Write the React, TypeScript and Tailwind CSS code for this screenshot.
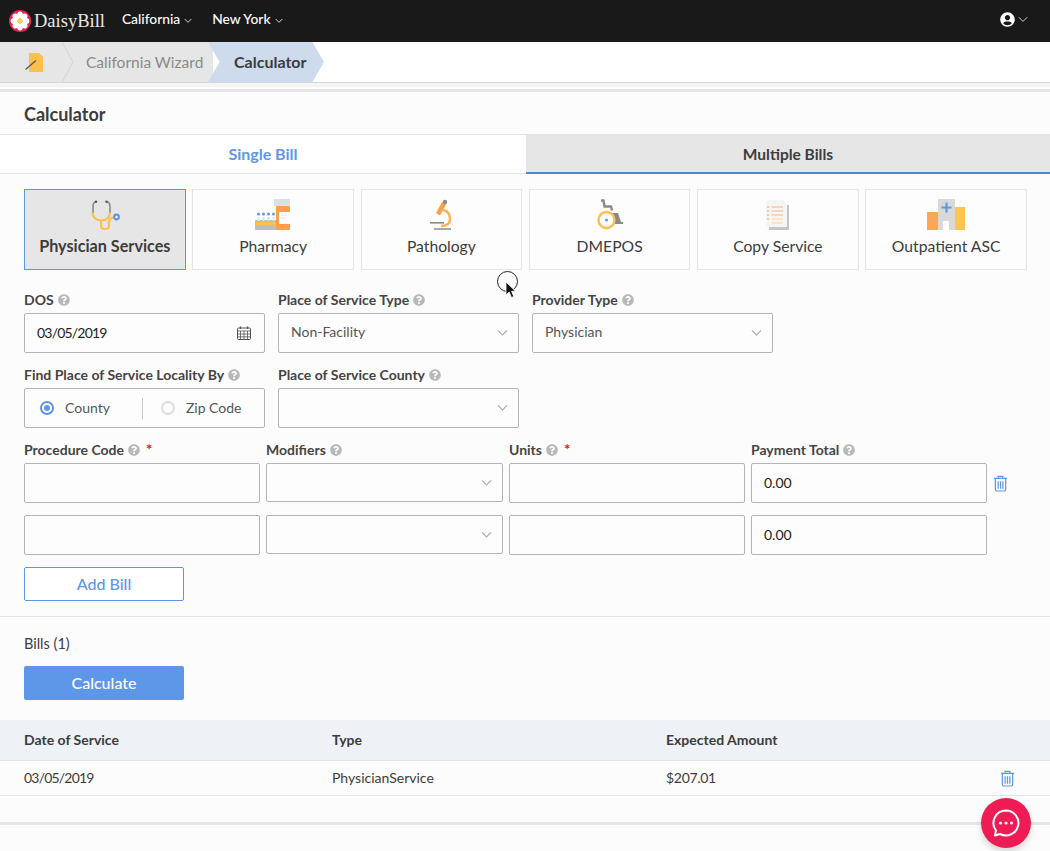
import { FaQuestionCircle, FaUserCircle } from "react-icons/fa";

const labelClass = "flex h-[17px] items-center gap-[4px] pb-[2px] text-[14px] font-bold leading-none text-[#444]";
const boxClass = "rounded-[2px] border border-[#b4b4b4] bg-[#fdfdfd]";

function Chevron({ className }: { className: string }) {
  return (
    <svg viewBox="0 0 12 8" className={className} fill="none" stroke="currentColor" strokeWidth="1.2">
      <path d="M1 1.500l5 5 5-5" />
    </svg>
  );
}

function TrashIcon() {
  return (
    <svg viewBox="0 0 16 18" className="h-[17px] w-[15px] text-[#5f97e8]" fill="none" stroke="currentColor" strokeWidth="1.300">
      <path d="M1 3.500h14M5.500 3.500V1.500h5v2M2.500 3.500v12a1.500 1.500 0 0 0 1.500 1.500h8a1.500 1.500 0 0 0 1.500-1.500v-12" />
      <path d="M5.500 6.500v8M8 6.500v8M10.500 6.500v8" />
    </svg>
  );
}

function Label({ text, required, width }: { text: string; required?: boolean; width?: string }) {
  return (
    <div className={`${labelClass} ${width ?? ""}`}>
      <span>{text}</span>
      <FaQuestionCircle className="size-[12px] shrink-0 text-[#b8b8b8]" />
      {required && <span className="ml-[2px] text-[15px] text-[#e0182d]">*</span>}
    </div>
  );
}

function SelectBox({ value, className }: { value?: string; className: string }) {
  return (
    <div className={`flex items-center justify-between pl-[12px] pr-[10px] text-[14px] text-[#555] ${boxClass} ${className}`}>
      <span className="-mt-[3px]">{value}</span>
      <Chevron className="w-[11px] text-[#aaa]" />
    </div>
  );
}

function Stethoscope() {
  return (
    <svg viewBox="0 0 32 32" className="size-[32px]">
      <path d="M7 3C5 3 4 5 4 8v6" fill="none" stroke="#8a8a8a" strokeWidth="1.600" />
      <path d="M18 3c2 0 3 2 3 5v6" fill="none" stroke="#8a8a8a" strokeWidth="1.600" />
      <circle cx="7" cy="2.800" r="1.200" fill="#555" />
      <circle cx="17.500" cy="2.800" r="1.200" fill="#555" />
      <path d="M3.500 13.500c0 5 4 8 9 8s8-3 8.500-8M12 21v6c0 4 8 4 8 0v-4c0-3 3-5 7-5" fill="none" stroke="#fcc04d" strokeWidth="2.200" />
      <circle cx="27.500" cy="18" r="3.400" fill="#5f97e8" />
      <circle cx="27.500" cy="18" r="1.200" fill="#fff" />
    </svg>
  );
}

function PharmacyIcon() {
  return (
    <svg viewBox="0 0 36 32" className="h-[32px] w-[36px]">
      <rect x="0" y="21" width="22" height="10" rx="1" fill="#bdbdbd" />
      <rect x="1" y="23" width="20" height="3" fill="#fcc04d" />
      <circle cx="3.500" cy="15" r="1.500" fill="#5f97e8" />
      <circle cx="8.500" cy="15" r="1.500" fill="#5f97e8" />
      <circle cx="13.500" cy="15" r="1.500" fill="#5f97e8" />
      <circle cx="18.500" cy="15" r="1.500" fill="#5f97e8" />
      <rect x="2.500" y="18" width="2" height="4" fill="#dfe3ea" />
      <rect x="7.500" y="18" width="2" height="4" fill="#dfe3ea" />
      <rect x="12.500" y="18" width="2" height="4" fill="#dfe3ea" />
      <rect x="17.500" y="18" width="2" height="4" fill="#dfe3ea" />
      <rect x="19" y="0" width="16" height="7" fill="#dedede" />
      <rect x="21" y="7" width="14" height="24" rx="1" fill="#fb9f4a" />
      <rect x="24" y="13" width="11" height="12" fill="#fdfdfd" />
      <path d="M26 16h6M26 19h4" stroke="#ddd" strokeWidth="0.800" />
    </svg>
  );
}

function MicroscopeIcon() {
  return (
    <svg viewBox="0 0 24 32" className="h-[32px] w-[24px]">
      <path d="M14 11c5 1 7 5 7 9 0 5-4 7-9 7" fill="none" stroke="#fcb24d" strokeWidth="2.400" />
      <path d="M13 3l4 2.500-6 11-4-2.500z" fill="#fb9f4a" />
      <circle cx="16" cy="3" r="2.200" fill="#8a8a8a" />
      <rect x="1" y="23" width="14" height="1.600" fill="#8a8a8a" />
      <rect x="5" y="29" width="17" height="2" fill="#a8a8a8" />
    </svg>
  );
}

function WheelchairIcon() {
  return (
    <svg viewBox="0 0 28 32" className="h-[32px] w-[28px]">
      <path d="M5 1.500h2.500l1 6h6.500l1 4" fill="none" stroke="#8a8a8a" strokeWidth="2.400" />
      <path d="M16 14h6l3 9h2v2h-8l-2-5h-3z" fill="#8a8a8a" />
      <circle cx="10.500" cy="21" r="8" fill="#fdfdfd" stroke="#fcc04d" strokeWidth="2.400" />
      <circle cx="10.500" cy="21" r="1.500" fill="#5f97e8" />
    </svg>
  );
}

function CopyIcon() {
  return (
    <svg viewBox="0 0 24 32" className="h-[32px] w-[24px]">
      <path d="M3 6h20v25H3z" fill="#c4c4c4" />
      <path d="M0 1h17l4 4v23H0z" fill="#f5f5f5" />
      <path d="M6 8h11M6 12h11M6 16h11" stroke="#fbb67a" strokeWidth="1" />
      <path d="M6 20h11M6 24h11" stroke="#fcd9a8" strokeWidth="1.200" />
      <path d="M1 8h2M1 12h2M1 16h2M1 20h2" stroke="#fb9f4a" strokeWidth="1" />
    </svg>
  );
}

function HospitalIcon() {
  return (
    <svg viewBox="0 0 38 32" className="h-[32px] w-[38px]">
      <rect x="0" y="13" width="12" height="18" fill="#fba659" />
      <rect x="28" y="8" width="10" height="23" fill="#fdc44f" />
      <rect x="11" y="0" width="17" height="31" fill="#d9d9d9" />
      <rect x="16" y="22" width="6" height="9" fill="#fdfdfd" />
      <path d="M19.500 3.500v10M14.500 8.500h10" stroke="#5f97e8" strokeWidth="2.200" />
    </svg>
  );
}

function WandIcon() {
  return (
    <svg viewBox="0 0 20 20" className="size-[20px]">
      <path d="M4 1h10l4 4v15H4z" fill="#fcc04d" />
      <path d="M0.500 17.500L11 8.500" stroke="#555" strokeWidth="1.200" />
    </svg>
  );
}

function DaisyLogo() {
  const petals = [0, 45, 90, 135, 180, 225, 270, 315];
  return (
    <svg viewBox="0 0 22 22" className="size-[22px] shrink-0">
      <circle cx="11" cy="11" r="11" fill="#e8234f" />
      {petals.map((angle) => (
        <ellipse key={angle} cx="11" cy="5.200" rx="2.900" ry="3.600" fill="#fff" transform={`rotate(${angle} 11 11)`} />
      ))}
      <circle cx="11" cy="11" r="2.400" fill="#fdd835" />
    </svg>
  );
}

const tiles = [
  { name: "Physician Services", icon: <Stethoscope />, active: true },
  { name: "Pharmacy", icon: <PharmacyIcon /> },
  { name: "Pathology", icon: <MicroscopeIcon /> },
  { name: "DMEPOS", icon: <WheelchairIcon /> },
  { name: "Copy Service", icon: <CopyIcon /> },
  { name: "Outpatient ASC", icon: <HospitalIcon /> },
];

function BillRow({ showTrash }: { showTrash?: boolean }) {
  return (
    <div className="flex items-start gap-[6px]">
      <div className={`h-[40px] w-[236px] ${boxClass}`} />
      <SelectBox className="h-[39px] w-[237px]" />
      <div className={`h-[40px] w-[236px] ${boxClass}`} />
      <div className={`flex h-[40px] w-[236px] items-center pb-[2px] pl-[12px] text-[14px] text-[#222] ${boxClass}`}>0.00</div>
      {showTrash && (
        <div className="flex h-[40px] items-center">
          <TrashIcon />
        </div>
      )}
    </div>
  );
}

export default function App() {
  return (
    <div className="relative h-[851px] overflow-hidden bg-[#fcfcfc] font-['Lato','Liberation_Sans',sans-serif] text-[#3c3c3c]">
      <div className="flex h-[42px] items-center bg-[#191919] pl-[9px] pr-[22px] text-white">
        <DaisyLogo />
        <span className="ml-[3px] font-['Liberation_Serif',serif] text-[18.500px] leading-none text-[#e8e8e8]">DaisyBill</span>
        <div className="ml-[17px] flex items-center gap-[4px] pb-[3px] text-[13.800px] font-medium">
          California
          <Chevron className="mt-[2px] w-[8px]" />
        </div>
        <div className="ml-[20px] flex items-center gap-[4px] pb-[3px] text-[13.800px] font-medium">
          New York
          <Chevron className="mt-[2px] w-[8px]" />
        </div>
        <div className="ml-auto flex items-center gap-[3px] pb-[3px]">
          <FaUserCircle className="size-[15px]" />
          <Chevron className="w-[10px] text-[#ccc]" />
        </div>
      </div>

      <div className="flex h-[41px] border-b border-[#d8d8d8] bg-white">
        <div className="relative flex w-[213px] items-center bg-[#e6e6e6]">
          <div className="ml-[25px]">
            <WandIcon />
          </div>
          <svg viewBox="0 0 12 40" className="absolute left-[62px] top-0 h-[40px] w-[12px]" fill="none" stroke="#d4d4d4">
            <path d="M0 0l11 20L0 40" />
          </svg>
          <span className="ml-[41px] pt-[1px] text-[15.500px] text-[#8a8a8a]">California Wizard</span>
        </div>
        <div className="-ml-[5px] flex w-[116px] items-center bg-[#cddbed] pl-[26px] text-[16px] font-bold text-[#3c3c3c] [clip-path:polygon(0_0,90%_0,100%_50%,90%_100%,0_100%,10%_50%)]">
          Calculator
        </div>
      </div>

      <div className="h-[4px] bg-[#f4f4f4]" />
      <div className="mt-[2px] h-[3px] bg-[#e6e6e6]" />

      <div className="flex h-[43px] items-center border-b border-[#e4e4e4] pl-[24px] pt-[2px] text-[18px] font-bold text-[#3c3c3c]">
        Calculator
      </div>

      <div className="flex h-[39px] text-[16px] font-bold">
        <div className="flex w-[526px] items-center justify-center border-b border-[#e4e4e4] bg-white text-[#5f97e8]">Single Bill</div>
        <div className="flex flex-1 items-center justify-center border-b-[2px] border-[#4f86d6] bg-[#e6e6e6] pt-[2px] text-[15.500px] text-[#3c3c3c]">Multiple Bills</div>
      </div>

      <div className="mt-[15px] grid h-[81px] grid-cols-6 gap-[6.600px] pl-[24px] pr-[23px]">
        {tiles.map((tile) => (
          <div
            key={tile.name}
            className={
              tile.active
                ? "flex flex-col items-center border border-[#6494dc] bg-[#e6e6e6] pt-[9px] text-[16.200px] font-bold"
                : "flex flex-col items-center border border-[#e6e6e6] bg-[#fdfdfd] pt-[9px] text-[15.700px]"
            }
          >
            <div className="flex h-[32px] items-center">{tile.icon}</div>
            <div className={tile.active ? "mt-[3px]" : "mt-[4px]"}>{tile.name}</div>
          </div>
        ))}
      </div>

      <div className="mt-[22px] flex gap-[13px] pl-[24px]">
        <div className="w-[241px]">
          <Label text="DOS" />
          <div className={`mt-[4px] flex h-[40px] items-center justify-between pl-[12px] pr-[13px] text-[14px] tracking-[-0.800px] text-[#222] ${boxClass}`}>
            <span className="-mt-[2px]">03/05/2019</span>
            <svg viewBox="0 0 14 14" className="size-[14px] text-[#555]" fill="none" stroke="currentColor">
              <rect x="0.500" y="2" width="13" height="11.500" rx="1" />
              <path d="M0.500 5h13M0.500 8h13M0.500 10.800h13M3.500 5v8.500M7 5v8.500M10.500 5v8.500" strokeWidth="0.800" />
              <path d="M3.500 0.500v2.500M10.500 0.500v2.500" strokeWidth="1.400" />
            </svg>
          </div>
        </div>
        <div className="w-[241px]">
          <Label text="Place of Service Type" />
          <SelectBox value="Non-Facility" className="mt-[4px] h-[40px]" />
        </div>
        <div className="w-[241px]">
          <Label text="Provider Type" />
          <SelectBox value="Physician" className="mt-[4px] h-[40px]" />
        </div>
      </div>

      <div className="mt-[14px] flex gap-[13px] pl-[24px]">
        <div className="w-[241px]">
          <Label text="Find Place of Service Locality By" />
          <div className={`mt-[4px] flex h-[40px] items-center text-[14px] text-[#555] ${boxClass}`}>
            <span className="ml-[15px] flex size-[14px] items-center justify-center rounded-full border-[2px] border-[#5f97e8]">
              <span className="size-[6px] rounded-full bg-[#5f97e8]" />
            </span>
            <span className="-mt-[2px] ml-[11px]">County</span>
            <span className="ml-[32px] h-[21px] w-px bg-[#c4c4c4]" />
            <span className="ml-[18px] size-[14px] rounded-full border-[2px] border-[#dcdcdc]" />
            <span className="-mt-[2px] ml-[11px]">Zip Code</span>
          </div>
        </div>
        <div className="w-[241px]">
          <Label text="Place of Service County" />
          <SelectBox className="mt-[4px] h-[40px]" />
        </div>
      </div>

      <div className="mt-[14px] flex gap-[6px] pl-[24px] pr-[20px]">
        <Label text="Procedure Code" required width="w-[236px]" />
        <Label text="Modifiers" width="w-[237px]" />
        <Label text="Units" required width="w-[236px]" />
        <Label text="Payment Total" width="w-[236px]" />
      </div>

      <div className="mt-[4px] flex flex-col gap-[12px] pl-[24px]">
        <BillRow showTrash />
        <BillRow />
      </div>

      <div className="mt-[12px] pl-[24px]">
        <div className="flex h-[34px] w-[160px] items-center justify-center rounded-[2px] border border-[#5f97e8] bg-white text-[16px] font-medium text-[#5f97e8]">
          Add Bill
        </div>
      </div>

      <div className="mt-[15px] border-t border-[#e4e4e4] pl-[24px] pt-[17px]">
        <div className="h-[20px] text-[14.500px] leading-[20px]">Bills (1)</div>
        <div className="mt-[12px] flex h-[34px] w-[160px] items-center justify-center rounded-[2px] bg-[#5f97e8] text-[16px] font-medium text-white">
          Calculate
        </div>
      </div>

      <div className="mt-[20px] grid h-[41px] grid-cols-[308px_334px_1fr] items-center border-b border-[#e4e4e4] bg-[#eef1f6] pb-[2px] pl-[24px] text-[14px] font-bold">
        <span>Date of Service</span>
        <span>Type</span>
        <span>Expected Amount</span>
      </div>
      <div className="grid h-[35px] grid-cols-[308px_334px_1fr_auto] items-center border-b border-[#e4e4e4] pl-[24px] pr-[35px] text-[14px]">
        <span className="-mt-[2px] tracking-[-0.800px]">03/05/2019</span>
        <span className="-mt-[2px]">PhysicianService</span>
        <span className="-mt-[2px] tracking-[-0.300px]">$207.01</span>
        <TrashIcon />
      </div>

      <div className="mt-[26px] h-[3px] bg-[#e6e6e6]" />

      <div className="absolute left-[981px] top-[798px] flex size-[50px] items-center justify-center rounded-full bg-[#ee1c54] shadow-[0_4px_6px_rgba(0,0,0,0.15)]">
        <svg viewBox="0 0 32 32" className="size-[32px]" fill="none">
          <path d="M16 3.500a12.500 12.500 0 1 1-6 23.500l-5 1.500 1-5A12.500 12.500 0 0 1 16 3.500z" stroke="#fff" strokeWidth="2" strokeLinejoin="round" />
          <circle cx="10.500" cy="16" r="1.600" fill="#fff" />
          <circle cx="16" cy="16" r="1.600" fill="#fff" />
          <circle cx="21.500" cy="16" r="1.600" fill="#fff" />
        </svg>
      </div>

      <div className="absolute left-[497px] top-[271px] size-[21px] rounded-full border border-[#222]" />
      <svg viewBox="0 0 12 18" className="absolute left-[505px] top-[281px] h-[18px] w-[12px]">
        <path d="M1 1v13l3.200-3 2.300 5.500 2.300-1-2.300-5.300H10.500z" fill="#111" stroke="#fff" strokeWidth="0.800" />
      </svg>
    </div>
  );
}
